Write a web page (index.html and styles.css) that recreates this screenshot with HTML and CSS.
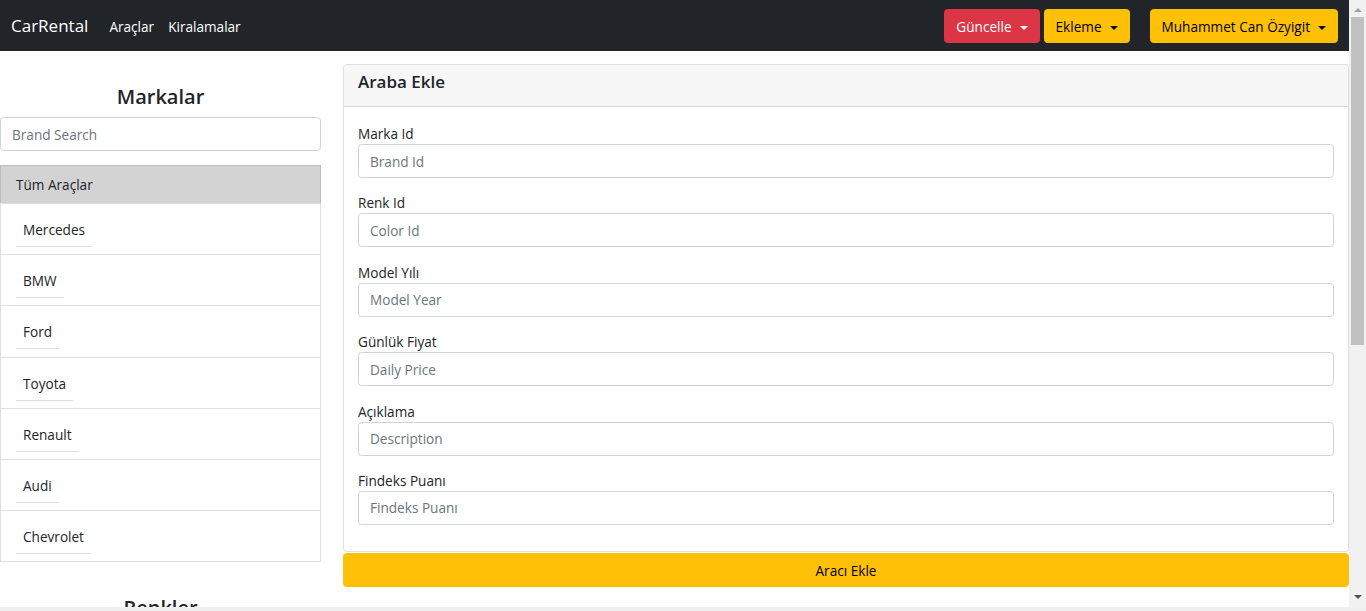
FILE: index.html
```html
<!DOCTYPE html>
<html lang="tr">
<head>
<meta charset="utf-8">
<title>CarRental</title>
<link rel="stylesheet" href="styles.css">
</head>
<body>
<div class="window">
  <div class="page">
    <nav class="navbar">
      <div class="nav-left">
        <a class="brand" href="#">CarRental</a>
        <ul class="nav-links">
          <li><a href="#">Araçlar</a></li>
          <li><a href="#">Kiralamalar</a></li>
        </ul>
      </div>
      <div class="nav-right">
        <div class="btn-pair">
          <button class="btn btn-danger dropdown-toggle">Güncelle</button>
          <button class="btn btn-warning dropdown-toggle">Ekleme</button>
        </div>
        <button class="btn btn-warning dropdown-toggle">Muhammet Can Özyigit</button>
      </div>
    </nav>

    <main class="layout">
      <aside class="sidebar">
        <section class="filter">
          <h4 class="filter-title">Markalar</h4>
          <input class="form-control" type="text" placeholder="Brand Search">
          <ul class="list">
            <li class="list-item list-item-all">Tüm Araçlar</li>
            <li class="list-item"><a class="item-link" href="#">Mercedes</a></li>
            <li class="list-item"><a class="item-link" href="#">BMW</a></li>
            <li class="list-item"><a class="item-link" href="#">Ford</a></li>
            <li class="list-item"><a class="item-link" href="#">Toyota</a></li>
            <li class="list-item"><a class="item-link" href="#">Renault</a></li>
            <li class="list-item"><a class="item-link" href="#">Audi</a></li>
            <li class="list-item"><a class="item-link" href="#">Chevrolet</a></li>
          </ul>
        </section>
        <section class="filter">
          <h4 class="filter-title">Renkler</h4>
          <input class="form-control" type="text" placeholder="Color Search">
        </section>
      </aside>

      <div class="content">
        <div class="card">
          <div class="card-header">Araba Ekle</div>
          <div class="card-body">
            <div class="form-group">
              <label class="form-label">Marka Id</label>
              <input class="form-control" type="text" placeholder="Brand Id">
            </div>
            <div class="form-group">
              <label class="form-label">Renk Id</label>
              <input class="form-control" type="text" placeholder="Color Id">
            </div>
            <div class="form-group">
              <label class="form-label">Model Yılı</label>
              <input class="form-control" type="text" placeholder="Model Year">
            </div>
            <div class="form-group">
              <label class="form-label">Günlük Fiyat</label>
              <input class="form-control" type="text" placeholder="Daily Price">
            </div>
            <div class="form-group">
              <label class="form-label">Açıklama</label>
              <input class="form-control" type="text" placeholder="Description">
            </div>
            <div class="form-group">
              <label class="form-label">Findeks Puanı</label>
              <input class="form-control" type="text" placeholder="Findeks Puanı">
            </div>
          </div>
        </div>
        <button class="btn btn-warning btn-block">Aracı Ekle</button>
      </div>
    </main>
  </div>

  <div class="scrollbar" aria-hidden="true">
    <div class="scroll-btn scroll-up"><span class="arrow arrow-up"></span></div>
    <div class="scroll-track"><div class="scroll-thumb"></div></div>
    <div class="scroll-btn scroll-down"><span class="arrow arrow-down"></span></div>
  </div>
  <div class="window-edge"></div>
</div>
</body>
</html>
```

FILE: styles.css
```css
html,
body {
  margin: 0;
  height: 100%;
  overflow: hidden;
}

body {
  font-family: "Open Sans", "Noto Sans", "Liberation Sans", sans-serif;
  font-size: 13.6px;
  line-height: 21px;
  color: #212529;
  background: #fff;
}

a {
  color: inherit;
  text-decoration: none;
}

ul {
  list-style: none;
  margin: 0;
  padding: 0;
}

/* ---------- window frame ---------- */
.window {
  height: 100%;
  display: grid;
  grid-template-columns: 1fr 17px;
  grid-template-rows: 1fr 4px;
}

.page {
  overflow: hidden;
  min-width: 0;
}

.scrollbar {
  background: #f1f1f1;
  display: flex;
  flex-direction: column;
}

.scroll-btn {
  height: 17px;
  display: flex;
  justify-content: center;
  align-items: center;
}

.scroll-up {
  padding-top: 2px;
  box-sizing: border-box;
}

.scroll-down {
  padding-bottom: 4px;
  box-sizing: border-box;
}

.arrow {
  width: 0;
  height: 0;
  border-left: 4px solid transparent;
  border-right: 4px solid transparent;
}

.arrow-up {
  border-bottom: 4px solid #a3a3a3;
}

.arrow-down {
  border-top: 4px solid #505050;
}

.scroll-track {
  flex: 1;
  padding: 0 2px;
}

.scroll-thumb {
  height: 328px;
  background: #c1c1c1;
}

.window-edge {
  grid-column: 1 / -1;
  background: #f0f0f0;
}

/* ---------- navbar ---------- */
.navbar {
  height: 51px;
  box-sizing: border-box;
  padding: 1px 11px 0;
  background: #212529;
  display: flex;
  align-items: center;
  justify-content: space-between;
}

.nav-left {
  display: flex;
  align-items: center;
}

.brand {
  color: #fff;
  font-size: 17px;
  line-height: 24px;
  margin-right: 14px;
}

.nav-links {
  display: flex;
}

.nav-links a {
  display: block;
  color: #fff;
  padding: 0 7px;
}

.nav-right {
  display: flex;
  align-items: center;
  gap: 20px;
}

.btn-pair {
  display: flex;
  gap: 4px;
}

.btn {
  font-family: inherit;
  font-size: 13.6px;
  line-height: 21px;
  height: 34px;
  padding: 0 11px;
  border: 1px solid transparent;
  border-radius: 3.6px;
  cursor: pointer;
}

.btn-danger {
  background: #dc3545;
  border-color: #dc3545;
  color: #fff;
}

.btn-warning {
  background: #ffc107;
  border-color: #ffc107;
  color: #000;
}

.dropdown-toggle::after {
  content: "";
  display: inline-block;
  margin-left: 8px;
  vertical-align: 2px;
  border-top: 4.5px solid currentColor;
  border-left: 4.5px solid transparent;
  border-right: 4.5px solid transparent;
}

/* ---------- layout ---------- */
.layout {
  display: grid;
  grid-template-columns: 321px 1fr;
  column-gap: 22px;
  align-items: start;
}

/* ---------- sidebar ---------- */
.filter {
  padding-top: 33px;
}

.filter-title {
  margin: 0 0 8px;
  text-align: center;
  font-size: 20px;
  line-height: 25px;
  font-weight: 600;
}

.form-control {
  display: block;
  box-sizing: border-box;
  width: 100%;
  height: 34px;
  padding: 0 11px;
  font-family: inherit;
  font-size: 13.6px;
  color: #212529;
  background: #fff;
  border: 1px solid #ced4da;
  border-radius: 3.6px;
  outline: none;
}

.form-control::placeholder {
  color: #6c757d;
  opacity: 1;
}

.list {
  margin-top: 14px;
}

.list-item {
  border: 1px solid #dfdfdf;
  padding: 9px 15px 7.2px;
  margin-top: -1px;
}

.list-item:first-child {
  margin-top: 0;
}

.list-item-all {
  background: #d3d3d3;
  border-color: #bdbdbd;
  padding: 8px 15px;
}

.item-link {
  display: inline-block;
  padding: 6px 7px;
  border-bottom: 1px solid #dcdcdc;
}

/* ---------- content ---------- */
.content {
  padding-top: 13px;
}

.card {
  border: 1px solid rgba(0, 0, 0, 0.125);
  border-radius: 3.6px;
  overflow: hidden;
}

.card-header {
  background: #f7f7f7;
  border-bottom: 1px solid rgba(0, 0, 0, 0.125);
  padding: 6px 14px 14px;
  font-size: 17px;
  line-height: 21px;
  font-weight: 600;
}

.card-body {
  padding: 16px 14px 12px;
}

.form-group {
  margin-bottom: 14.4px;
}

.form-label {
  display: block;
  line-height: 21px;
}

.btn-block {
  display: block;
  width: 100%;
  margin-top: 1px;
}
```
